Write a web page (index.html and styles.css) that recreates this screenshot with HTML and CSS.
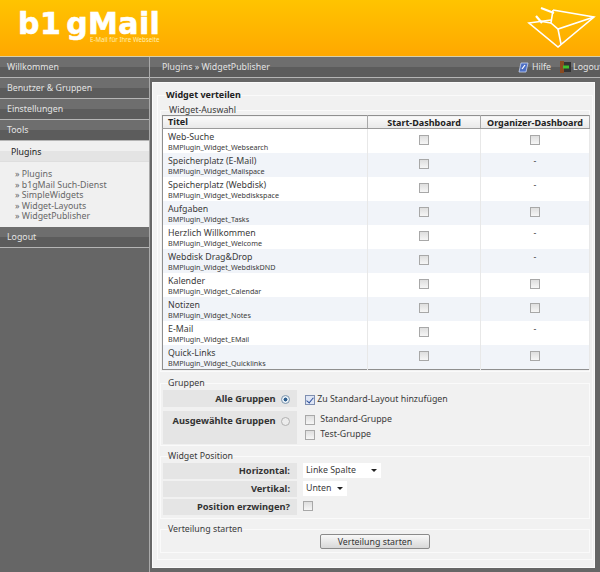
FILE: index.html
```html
<!DOCTYPE html>
<html>
<head>
    <title>b1gMail Admin</title>
    <link rel="stylesheet" href="styles.css">
</head>
<body>
    <div id="header">
        <div class="logo">
            <div class="logo_name">b<span class="logo_one">1</span>gMail</div>
            <div class="logo_sub">E-Mail für Ihre Webseite</div>
        </div>
        <svg class="logo_icon" width="72" height="44" viewBox="0 0 72 44" fill="none" stroke="#fff" stroke-width="1.6">
            <path d="M29 6L70 13L34 43L5 19L27 16"/>
            <path d="M29 6L27 19L34 25L70 13"/>
            <path d="M34 25L37 40M15 17L27 19"/>
            <path d="M17 4L30 9M12 12L18 19" stroke-width="2.2"/>
        </svg>
    </div>
    <div id="wrap">
        <div id="sidebar">
            <a class="menu_item">Willkommen</a>
            <a class="menu_item">Benutzer &amp; Gruppen</a>
            <a class="menu_item">Einstellungen</a>
            <a class="menu_item">Tools</a>
            <div class="submenu">
                <div class="submenu_title">Plugins</div>
                <ul>
                    <li>Plugins</li>
                    <li>b1gMail Such-Dienst</li>
                    <li>SimpleWidgets</li>
                    <li>Widget-Layouts</li>
                    <li>WidgetPublisher</li>
                </ul>
            </div>
            <a class="menu_item">Logout</a>
        </div>
        <div id="main">
            <div id="topbar">
                <span>Plugins » WidgetPublisher</span>
                <div class="top_links">
                    <svg width="11" height="11" viewBox="0 0 11 11">
                        <path d="M3 1H10L8 10H1Z" fill="#4d6fc4" stroke="#c8d4f0" stroke-width="0.8"/>
                        <path d="M4 7L7 3" stroke="#fff" stroke-width="1.2"/>
                    </svg>
                    <span class="help_link">Hilfe</span>
                    <svg width="11" height="12" viewBox="0 0 11 12">
                        <rect x="0" y="0" width="4" height="12" fill="#8a4a20"/>
                        <rect x="4" y="1" width="7" height="10" fill="#333"/>
                        <path d="M3 6H9" stroke="#3fbf2f" stroke-width="3"/>
                    </svg>
                    <span>Logout</span>
                </div>
            </div>
            <div id="content">
                <fieldset class="outer">
                    <legend class="outer_title">Widget verteilen</legend>
                    <fieldset class="box box_first">
                        <legend>Widget-Auswahl</legend>
                        <table class="list">
                            <tr>
                                <th class="col_title">Titel</th>
                                <th>Start-Dashboard</th>
                                <th>Organizer-Dashboard</th>
                            </tr>
                            <tr>
                                <td class="col_title">Web-Suche<small>BMPlugin_Widget_Websearch</small></td>
                                <td><input type="checkbox"></td>
                                <td><input type="checkbox"></td>
                            </tr>
                            <tr class="alt">
                                <td class="col_title">Speicherplatz (E-Mail)<small>BMPlugin_Widget_Mailspace</small></td>
                                <td><input type="checkbox"></td>
                                <td class="none">-</td>
                            </tr>
                            <tr>
                                <td class="col_title">Speicherplatz (Webdisk)<small>BMPlugin_Widget_Webdiskspace</small></td>
                                <td><input type="checkbox"></td>
                                <td class="none">-</td>
                            </tr>
                            <tr class="alt">
                                <td class="col_title">Aufgaben<small>BMPlugin_Widget_Tasks</small></td>
                                <td><input type="checkbox"></td>
                                <td><input type="checkbox"></td>
                            </tr>
                            <tr>
                                <td class="col_title">Herzlich Willkommen<small>BMPlugin_Widget_Welcome</small></td>
                                <td><input type="checkbox"></td>
                                <td class="none">-</td>
                            </tr>
                            <tr class="alt">
                                <td class="col_title">Webdisk Drag&amp;Drop<small>BMPlugin_Widget_WebdiskDND</small></td>
                                <td><input type="checkbox"></td>
                                <td class="none">-</td>
                            </tr>
                            <tr>
                                <td class="col_title">Kalender<small>BMPlugin_Widget_Calendar</small></td>
                                <td><input type="checkbox"></td>
                                <td><input type="checkbox"></td>
                            </tr>
                            <tr class="alt">
                                <td class="col_title">Notizen<small>BMPlugin_Widget_Notes</small></td>
                                <td><input type="checkbox"></td>
                                <td><input type="checkbox"></td>
                            </tr>
                            <tr>
                                <td class="col_title">E-Mail<small>BMPlugin_Widget_EMail</small></td>
                                <td><input type="checkbox"></td>
                                <td class="none">-</td>
                            </tr>
                            <tr class="alt">
                                <td class="col_title">Quick-Links<small>BMPlugin_Widget_Quicklinks</small></td>
                                <td><input type="checkbox"></td>
                                <td><input type="checkbox"></td>
                            </tr>
                        </table>
                    </fieldset>
                    <fieldset class="box box_groups">
                        <legend>Gruppen</legend>
                        <div class="form_row row_all">
                            <div class="form_label">Alle Gruppen <input type="radio" name="groups" checked></div>
                            <label class="form_value"><input type="checkbox" checked> Zu Standard-Layout hinzufügen</label>
                        </div>
                        <div class="form_row row_some">
                            <div class="form_label">Ausgewählte Gruppen <input type="radio" name="groups"></div>
                            <div class="form_value form_stack">
                                <label><input type="checkbox"> <span>Standard-Gruppe</span></label>
                                <label><input type="checkbox"> <span>Test-Gruppe</span></label>
                            </div>
                        </div>
                    </fieldset>
                    <fieldset class="box box_position">
                        <legend>Widget Position</legend>
                        <div class="form_row row_pos">
                            <div class="form_label">Horizontal:</div>
                            <div class="form_value"><span class="select select_wide">Linke Spalte</span></div>
                        </div>
                        <div class="form_row row_pos">
                            <div class="form_label">Vertikal:</div>
                            <div class="form_value"><span class="select select_small">Unten</span></div>
                        </div>
                        <div class="form_row row_pos">
                            <div class="form_label">Position erzwingen?</div>
                            <div class="form_value"><input type="checkbox"></div>
                        </div>
                    </fieldset>
                    <fieldset class="box box_start">
                        <legend>Verteilung starten</legend>
                        <div class="start_row"><button>Verteilung starten</button></div>
                    </fieldset>
                </fieldset>
            </div>
        </div>
    </div>
</body>
</html>
```

FILE: styles.css
```css
html, body {
    height: 572px;
    overflow: hidden;
}
body {
    margin: 0;
    padding: 0;
    font-family: "Noto Sans", "DejaVu Sans", sans-serif;
    font-size: 8.8px;
    color: #3a3a3a;
    background-color: #666;
}
#header {
    height: 56px;
    display: flex;
    justify-content: space-between;
    background: linear-gradient(#ffc400, #ffa800);
    border-bottom: 1px solid #d9cfa8;
}
.logo {
    padding: 11px 0 0 18px;
    color: #fff;
}
.logo_name {
    font-family: "DejaVu Sans", sans-serif;
    font-size: 30px;
    font-weight: bold;
    line-height: 26px;
    letter-spacing: 0.4px;
    -webkit-text-stroke: 0.6px #fff;
}
.logo_one {
    margin-right: 5px;
}
.logo_sub {
    margin-left: 72px;
    font-size: 6.2px;
    line-height: 5px;
    color: #ffeeb0;
}
.logo_icon {
    margin: 4px 4px 0 0;
}
#wrap {
    display: flex;
    height: 515px;
}
#sidebar {
    width: 149px;
    flex: none;
    background-color: #666;
    border-right: 1px solid #aaa;
}
.menu_item {
    display: block;
    height: 20px;
    line-height: 20px;
    padding-left: 7px;
    color: #e4e4e4;
    background: linear-gradient(#6e6e6e 50%, #5c5c5c 50%);
    border-bottom: 1px solid #b5b5b5;
}
.submenu {
    height: 86px;
    background-color: #f0f0f0;
}
.submenu_title {
    height: 20px;
    line-height: 22px;
    padding-left: 11px;
    color: #222;
    background: linear-gradient(#f0f0f0 50%, #e4e4e4 50%);
    border-bottom: 1px solid #dedede;
}
.submenu ul {
    list-style: none;
    margin: 7px 0 0;
    padding: 0 0 0 15px;
    color: #666;
    line-height: 10.5px;
}
.submenu li::before {
    content: "» ";
}
#main {
    flex: 1;
    min-width: 0;
    padding-left: 2px;
}
#topbar {
    height: 20px;
    margin-left: -2px;
    padding: 0 0 0 12px;
    display: flex;
    justify-content: space-between;
    align-items: center;
    color: #e4e4e4;
    background: linear-gradient(#6e6e6e 50%, #5c5c5c 50%);
    border-bottom: 1px solid #b5b5b5;
}
.top_links {
    display: flex;
    align-items: center;
    gap: 2px;
    width: 82px;
    white-space: nowrap;
    flex: none;
}
.top_links svg {
    flex: none;
}
.help_link {
    margin: 0 7px 0 1px;
}
#content {
    margin: 4px 5px 0 0;
    height: 486px;
    box-sizing: border-box;
    padding: 7px 1px 0 4px;
    background-color: #f1f1f1;
    border: 1px solid #fafafa;
}
fieldset {
    margin: 0;
    padding: 0;
    border: 1px solid #fafafa;
    min-width: 0;
}
legend {
    padding: 0;
    font-size: 8.8px;
    line-height: 10px;
}
.outer {
    height: 470px;
    box-sizing: border-box;
    padding: 0 2px;
}
.outer_title {
    margin-left: 6px;
    font-size: 9px;
    font-weight: bold;
    color: #222;
}
.box legend {
    margin-left: 7px;
}
.box_first {
    height: 267px;
    box-sizing: border-box;
    padding: 0 1px;
    margin-top: 5px;
}
.list {
    width: 428px;
    border-collapse: collapse;
    border: 1px solid #8f8f8f;
    background-color: #fff;
    table-layout: fixed;
}
.list th {
    height: 12px;
    padding: 0;
    font-size: 9px;
    line-height: 11px;
    color: #222;
    text-align: center;
    background: linear-gradient(#fafafa, #e8e8e8);
    border-bottom: 1px solid #9a9a9a;
    border-right: 1px solid #a8a8a8;
}
.list td {
    height: 24px;
    padding: 0;
    text-align: center;
    border-right: 1px solid #e8e8e8;
}
.list td input {
    margin-bottom: 3px;
}
.list th:nth-child(1) {
    width: 199px;
}
.list th:nth-child(2) {
    width: 112px;
}
.list .col_title {
    text-align: left;
    padding-left: 5px;
    line-height: 10px;
}
.list td.col_title {
    height: 22px;
    padding-top: 2px;
}
.list small {
    display: block;
    font-size: 7.2px;
}
.list .alt {
    background-color: #f1f4f9;
}
.list .none {
    vertical-align: top;
    line-height: 16px;
}
input[type="checkbox"], input[type="radio"] {
    appearance: none;
    width: 10px;
    height: 10px;
    margin: 0;
    vertical-align: middle;
    background: linear-gradient(#dedede, #f6f6f6);
    border: 1px solid #a8a8a8;
}
input[type="radio"] {
    width: 9px;
    height: 9px;
    margin-left: 3px;
    border-radius: 50%;
    background: #ececec;
    border-color: #b0b0b0;
}
input[type="radio"]:checked {
    background: radial-gradient(#2f5f8f 35%, #e8f0f6 45%);
    border-color: #7d96ad;
}
input[type="checkbox"]:checked {
    background: #dfe6f5;
    border-color: #7f8fb0;
    position: relative;
}
input[type="checkbox"]:checked::after {
    content: "";
    position: absolute;
    left: 2px;
    top: 0;
    width: 3px;
    height: 6px;
    border: solid #2d4f9a;
    border-width: 0 1.5px 1.5px 0;
    transform: rotate(40deg);
}
.box_groups {
    margin-top: 6px;
    height: 68px;
    box-sizing: border-box;
    padding-top: 2px;
}
.box_position {
    margin-top: 5px;
    height: 68px;
    box-sizing: border-box;
    padding-top: 2px;
}
.box_start {
    margin-top: 5px;
    height: 29px;
    box-sizing: border-box;
}
.form_row {
    display: flex;
    margin: 0 0 2px 2px;
}
.form_label {
    width: 134px;
    box-sizing: border-box;
    padding-right: 7px;
    text-align: right;
    font-size: 9.3px;
    font-weight: bold;
    color: #333;
    background-color: #e5e5e5;
}
.form_value {
    padding-left: 6px;
    display: block;
}
.row_all .form_label {
    height: 17px;
    line-height: 18px;
}
.row_some {
    margin-bottom: 0;
}
.row_some .form_label {
    height: 33px;
    line-height: 19px;
}
.row_all .form_value {
    padding-left: 8px;
    line-height: 19px;
}
.form_stack {
    padding-top: 1px;
}
.form_stack label {
    display: block;
    height: 15px;
    line-height: 15px;
    padding-left: 2px;
}
.form_stack span {
    margin-left: 3px;
}
.row_pos {
    height: 16px;
}
.row_pos .form_label {
    height: 16px;
    line-height: 16px;
}
.select {
    display: inline-block;
    box-sizing: border-box;
    height: 15px;
    line-height: 15px;
    padding-left: 3px;
    background-color: #fff;
    position: relative;
}
.select::after {
    content: "";
    position: absolute;
    right: 4px;
    top: 6px;
    border: 3px solid transparent;
    border-top: 3px solid #222;
    border-bottom: 0;
}
.select_wide {
    width: 78px;
}
.select_small {
    width: 44px;
}
.start_row {
    text-align: center;
}
button {
    width: 110px;
    height: 15px;
    padding: 0;
    font-family: inherit;
    font-size: 8.8px;
    color: #333;
    background: linear-gradient(#f8f8f8, #d8d8d8);
    border: 1px solid #8a8a8a;
    border-radius: 2px;
}
```
